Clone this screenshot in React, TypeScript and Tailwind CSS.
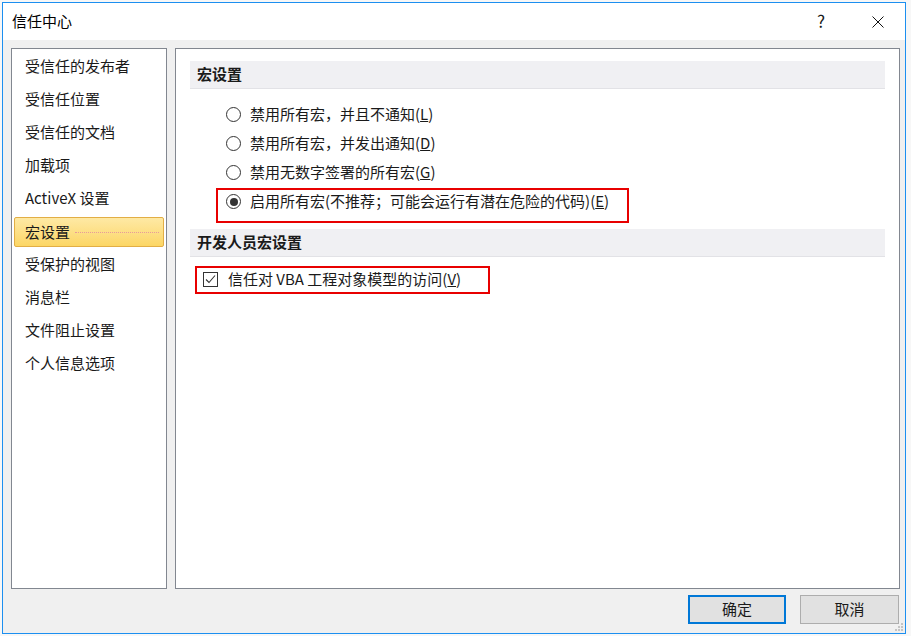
import React from 'react'

const navItems = [
  '受信任的发布者',
  '受信任位置',
  '受信任的文档',
  '加载项',
  'ActiveX 设置',
  '宏设置',
  '受保护的视图',
  '消息栏',
  '文件阻止设置',
  '个人信息选项',
]

const macroOptions = [
  { label: '禁用所有宏，并且不通知(', key: 'L', checked: false },
  { label: '禁用所有宏，并发出通知(', key: 'D', checked: false },
  { label: '禁用无数字签署的所有宏(', key: 'G', checked: false },
  { label: '启用所有宏(不推荐；可能会运行有潜在危险的代码)(', key: 'E', checked: true },
]

const font = { fontFamily: '"Noto Sans CJK SC", "Noto Sans", sans-serif' }

function Radio({ checked }: { checked: boolean }) {
  return (
    <span className="w-[15px] h-[15px] rounded-full border border-[#333333] bg-white flex items-center justify-center shrink-0">
      {checked && <span className="w-[8px] h-[8px] rounded-full bg-[#333333]" />}
    </span>
  )
}

function SectionHeader({ children }: { children: React.ReactNode }) {
  return (
    <div className="h-[28px] bg-[#f0f0f3] border-b border-[#e2e2e6] flex items-center pl-[7px] pb-[3px] font-bold text-[15px] text-[#1a1a1a]">
      {children}
    </div>
  )
}

export default function App() {
  return (
    <div className="w-[911px] h-[636px] bg-[#f7f7f7] pl-[2px] pt-[2px] text-[15px] leading-none text-black" style={font}>
      <div className="relative w-[904px] h-[632px] border border-[#1c8ff0] bg-[#f0f0f0] flex flex-col">
        {/* title bar */}
        <div className="h-[37px] bg-white flex items-center shrink-0">
          <span className="pl-[9px] pb-[2px] text-[15px]">信任中心</span>
          <div className="ml-auto flex items-center gap-[11px] mr-[4px]">
            <span className="w-[46px] h-[37px] flex items-center justify-center pb-[2px] text-[17px] text-[#1a1a1a]">?</span>
            <span className="w-[46px] h-[37px] flex items-center justify-center">
              <svg width="12" height="12" viewBox="0 0 12 12" aria-hidden="true">
                <path d="M0.5 0.5 L11.5 11.5 M11.5 0.5 L0.5 11.5" stroke="#111" strokeWidth="1" fill="none" />
              </svg>
            </span>
          </div>
        </div>

        {/* body */}
        <div className="flex-1 flex flex-col pt-[8px] pl-[8px] pr-[5px]">
          <div className="flex gap-[8px] h-[541px]">
            {/* nav */}
            <div className="w-[156px] h-full bg-white border border-[#828790] pt-[1px]">
              {navItems.map((item) => {
                const selected = item === '宏设置'
                return (
                  <div key={item} className="h-[33px] flex items-center px-[2px]">
                    <div
                      className={
                        selected
                          ? 'relative w-full h-[30px] flex items-center pl-[10px] pb-[1px] rounded-[2px] border border-[#e2ae45] bg-gradient-to-b from-[#fee9a4] to-[#fcd664]'
                          : 'w-full h-[30px] flex items-center pl-[11px] pb-[2px]'
                      }
                    >
                      <span className="text-[15px] text-[#1a1a1a]">{item}</span>
                      {selected && (
                        <span className="absolute left-[60px] right-[4px] top-[14px] border-t border-dotted border-[#e79a9a]" />
                      )}
                    </div>
                  </div>
                )
              })}
            </div>

            {/* content */}
            <div className="flex-1 h-full bg-white border border-[#828790] pt-[12px] px-[14px]">
              <SectionHeader>宏设置</SectionHeader>
              <div className="mt-[11px] flex flex-col">
                {macroOptions.map((o) => (
                  <div key={o.key} className="relative h-[29px] flex items-center pl-[36px]">
                    <Radio checked={o.checked} />
                    <span className="ml-[9px] pb-[2px] text-[15px] text-[#1a1a1a]">
                      {o.label}
                      <span className="underline">{o.key}</span>)
                    </span>
                    {o.checked && (
                      <span className="absolute left-[26px] top-[1px] w-[413px] h-[35px] border-2 border-[#e80000]" />
                    )}
                  </div>
                ))}
              </div>

              <div className="mt-[13px]">
                <SectionHeader>开发人员宏设置</SectionHeader>
              </div>
              <div className="relative mt-[8px] h-[28px] flex items-center pl-[13px]">
                <span className="w-[15px] h-[15px] border border-[#333333] bg-white flex items-center justify-center shrink-0">
                  <svg width="11" height="11" viewBox="0 0 11 11" aria-hidden="true">
                    <path d="M1 5.5 L4 8.5 L10 1.5" stroke="#333" strokeWidth="1.1" fill="none" />
                  </svg>
                </span>
                <span className="ml-[10px] pb-[2px] text-[15px] text-[#1a1a1a]">
                  信任对 VBA 工程对象模型的访问(<span className="underline">V</span>)
                </span>
                <span className="absolute left-[5px] top-[1px] w-[295px] h-[28px] border-2 border-[#e80000]" />
              </div>
            </div>
          </div>

          {/* buttons */}
          <div className="mt-[6px] flex justify-end gap-[14px] pr-[1px]">
            <button className="w-[98px] h-[29px] bg-[#e1e1e1] border-2 border-[#0078d7] pb-[2px] text-[15px] text-[#1a1a1a] flex items-center justify-center">
              确定
            </button>
            <button className="w-[99px] h-[29px] bg-[#e1e1e1] border border-[#adadad] pb-[2px] text-[15px] text-[#1a1a1a] flex items-center justify-center">
              取消
            </button>
          </div>
        </div>

        {/* resize grip */}
        <svg className="absolute right-[1px] bottom-[1px]" width="10" height="10" viewBox="0 0 10 10" aria-hidden="true">
          <rect x="7" y="1" width="2" height="2" fill="#c4c4c4" />
          <rect x="4" y="4" width="2" height="2" fill="#c4c4c4" />
          <rect x="7" y="4" width="2" height="2" fill="#c4c4c4" />
          <rect x="1" y="7" width="2" height="2" fill="#c4c4c4" />
          <rect x="4" y="7" width="2" height="2" fill="#c4c4c4" />
          <rect x="7" y="7" width="2" height="2" fill="#c4c4c4" />
        </svg>
      </div>
    </div>
  )
}
